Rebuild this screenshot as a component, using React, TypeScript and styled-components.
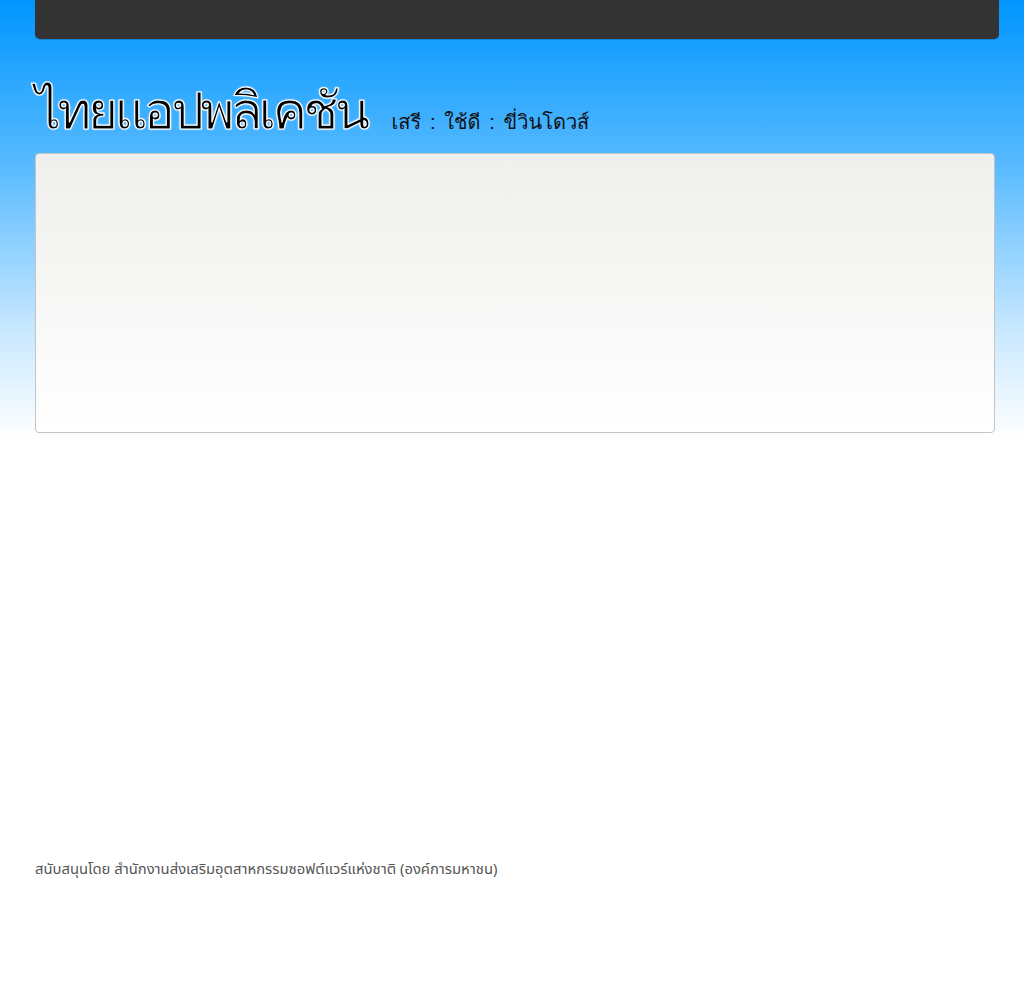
import React from "react";
import styled, { createGlobalStyle } from "styled-components";

const Global = createGlobalStyle`
  html, body { margin: 0; padding: 0; }
  body {
    min-height: 1000px;
    background: linear-gradient(to bottom, #0096ff 0px, #55b9ff 160px, #c8e8ff 330px, #ffffff 440px, #ffffff 100%);
    background-repeat: no-repeat;
    background-color: #fff;
    font-family: "Noto Sans", "Noto Sans Thai", "Liberation Sans", sans-serif;
  }
`;

const Page = styled.div`
  width: 964px;
  margin: 0 0 0 35px;
  display: flex;
  flex-direction: column;
`;

const TopBar = styled.div`
  height: 39px;
  background: #333333;
  border-radius: 0 0 5px 5px;
  box-shadow: 0 1px 0 rgba(0,0,0,0.15);
`;

const Header = styled.div`
  display: flex;
  align-items: baseline;
  gap: 25px;
  margin-top: 33px;
  height: 81px;
`;

const Title = styled.h1`
  margin: 0;
  font-family: "Loma", "Noto Sans Thai", sans-serif;
  font-size: 52px;
  font-weight: 400;
  letter-spacing: -3.9px;
  line-height: 78px;
  color: #000;
  -webkit-text-stroke: 1.1px #fff;
  text-shadow: 0 0 2px #fff, 0 0 2px #fff;
`;

const Sub = styled.span`
  font-family: "Loma", "Noto Sans Thai", sans-serif;
  font-size: 20px;
  font-weight: 400;
  color: #111;
  word-spacing: 2px;
`;

const Panel = styled.div`
  width: 958px;
  height: 278px;
  border: 1px solid #c4c4c4;
  border-radius: 4px;
  background: linear-gradient(to bottom, #efefed, #ffffff);
`;

const Footer = styled.div`
  margin-top: 425px;
  font-size: 14.8px;
  color: #555;
`;

export default function App() {
  return (
    <>
      <Global />
      <Page>
        <TopBar />
        <Header>
          <Title>ไทยแอปพลิเคชัน</Title>
          <Sub>เสรี : ใช้ดี : ขี่วินโดวส์</Sub>
        </Header>
        <Panel />
        <Footer>สนับสนุนโดย สำนักงานส่งเสริมอุตสาหกรรมซอฟต์แวร์แห่งชาติ (องค์การมหาชน)</Footer>
      </Page>
    </>
  );
}
